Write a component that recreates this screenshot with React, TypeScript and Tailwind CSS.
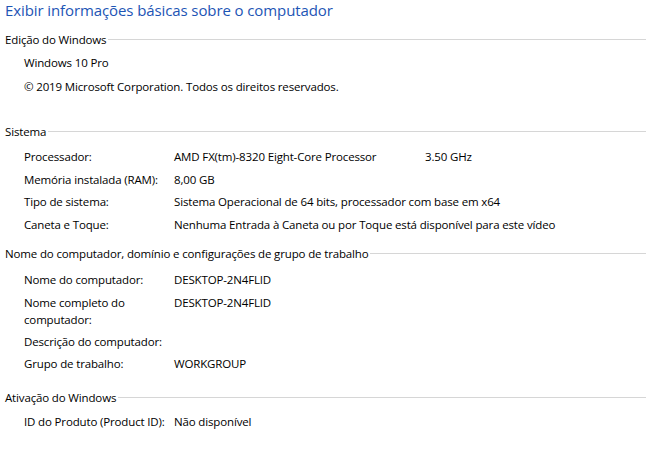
const font = { fontFamily: '"Open Sans", "Noto Sans", sans-serif' };

function Header({ children, top }: { children: React.ReactNode; top: string }) {
  return (
    <div className={`flex items-center pl-[5px] pr-[1px] ${top}`}>
      <span className="shrink-0 leading-[17px]">{children}</span>
      <div className="ml-[2px] h-px flex-1 bg-[#d6d6d6]" />
    </div>
  );
}

function Row({ label, value, extra, mt = "mt-[5.5px]" }: { label: string; value?: string; extra?: string; mt?: string }) {
  return (
    <div className={`flex pl-[24px] leading-[17px] ${mt}`}>
      <div className="w-[150px] shrink-0 pr-[4px]">{label}</div>
      <div className="w-[251px] shrink-0 whitespace-nowrap">{value}</div>
      {extra ? <div className="whitespace-nowrap">{extra}</div> : null}
    </div>
  );
}

export default function App() {
  return (
    <div
      className="w-[647px] h-[468px] overflow-hidden bg-white text-[11.5px] tracking-[-0.15px] text-black"
      style={font}
    >
      <div className="pl-[5px] pt-[0px] text-[15px] tracking-[-0.1px] leading-[20px] text-[#1d55b5]">
        Exibir informações básicas sobre o computador
      </div>

      <Header top="mt-[11px]">Edição do Windows</Header>
      <div className="pl-[24px] leading-[17px] mt-[6px]">Windows 10 Pro</div>
      <div className="pl-[24px] leading-[17px] mt-[7px]">© 2019 Microsoft Corporation. Todos os direitos reservados.</div>

      <Header top="mt-[28px]">Sistema</Header>
      <Row label="Processador:" value="AMD FX(tm)-8320 Eight-Core Processor" extra="3.50 GHz" mt="mt-[8px]" />
      <Row label="Memória instalada (RAM):" value="8,00 GB" />
      <Row label="Tipo de sistema:" value="Sistema Operacional de 64 bits, processador com base em x64" />
      <Row label="Caneta e Toque:" value="Nenhuma Entrada à Caneta ou por Toque está disponível para este vídeo" />

      <Header top="mt-[12.5px]">Nome do computador, domínio e configurações de grupo de trabalho</Header>
      <Row label="Nome do computador:" value="DESKTOP-2N4FLID" mt="mt-[9px]" />
      <Row label="Nome completo do computador:" value="DESKTOP-2N4FLID" mt="mt-[6px]" />
      <Row label="Descrição do computador:" mt="mt-[5px]" />
      <Row label="Grupo de trabalho:" value="WORKGROUP" mt="mt-[5px]" />

      <Header top="mt-[17px]">Ativação do Windows</Header>
      <Row label="ID do Produto (Product ID):" value="Não disponível" mt="mt-[7px]" />
    </div>
  );
}
